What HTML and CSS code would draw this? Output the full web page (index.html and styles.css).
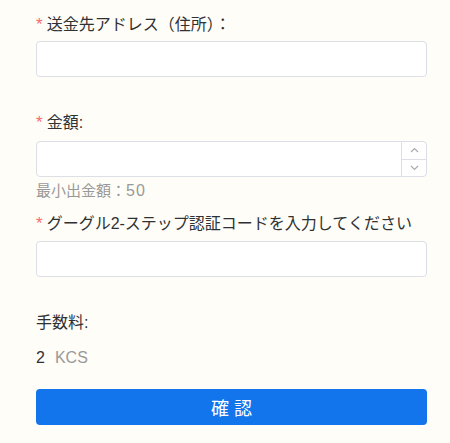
FILE: index.html
```html
<!DOCTYPE html>
<html lang="ja">
<head>
<meta charset="utf-8">
<link rel="stylesheet" href="styles.css">
</head>
<body>
<form class="form">
  <div class="item item-addr">
    <label class="label"><span class="req">*</span>送金先アドレス（住所）：</label>
    <div class="input"></div>
  </div>
  <div class="item item-amount">
    <label class="label"><span class="req">*</span>金額:</label>
    <div class="input input-number">
      <div class="field"></div>
      <div class="controls">
        <span class="ctl ctl-up">
          <svg width="9" height="6" viewBox="0 0 9 6"><path d="M1 5 L4.5 1.5 L8 5" fill="none" stroke="#a8abb2" stroke-width="1.2"/></svg>
        </span>
        <span class="ctl ctl-down">
          <svg width="9" height="6" viewBox="0 0 9 6"><path d="M1 1 L4.5 4.5 L8 1" fill="none" stroke="#a8abb2" stroke-width="1.2"/></svg>
        </span>
      </div>
    </div>
    <div class="hint">最小出金額：<span class="hint-num">50</span></div>
  </div>
  <div class="item item-code">
    <label class="label"><span class="req">*</span>グーグル2-ステップ認証コードを入力してください</label>
    <div class="input"></div>
  </div>
  <div class="fee">
    <div class="label">手数料:</div>
    <div class="fee-value"><span class="num">2</span><span class="unit">KCS</span></div>
  </div>
  <button type="button" class="btn">確 認</button>
</form>
</body>
</html>
```

FILE: styles.css
```css
html, body {
  margin: 0;
  padding: 0;
  background: #fffdf8;
}
body {
  font-family: "Liberation Sans", "Noto Sans CJK JP", sans-serif;
  color: #303133;
}
.form {
  width: 391px;
  padding: 13px 0 0 36px;
}
.label {
  display: block;
  font-size: 16px;
  line-height: 22px;
  padding-top: 1px;
  color: #303133;
}
.req {
  color: #f56c6c;
  margin-right: 4px;
  font-size: 17px;
}
.input {
  box-sizing: border-box;
  height: 36px;
  background: #fff;
  border: 1px solid #dcdfe6;
  border-radius: 4px;
}
.item-addr .label { margin-bottom: 5px; }
.item-addr { margin-bottom: 34px; }
.item-amount .label { margin-bottom: 7px; }
.input-number {
  display: flex;
}
.field { flex: 1; }
.controls {
  width: 24px;
  display: flex;
  flex-direction: column;
  border-left: 1px solid #dcdfe6;
}
.ctl {
  flex: 1;
  display: flex;
  align-items: center;
  justify-content: center;
}
.ctl-up { border-bottom: 1px solid #dcdfe6; }
.hint {
  margin-top: 5px;
  font-size: 15px;
  line-height: 18px;
  color: #999;
}
.hint-num {
  font-size: 16px;
  letter-spacing: 1px;
}
.item-amount { margin-bottom: 12px; }
.item-code .label { margin-bottom: 6px; }
.item-code { margin-bottom: 34px; }
.fee-value {
  margin-top: 13px;
  font-size: 16px;
  line-height: 22px;
}
.num { color: #303133; margin-right: 10px; }
.unit { color: #999; }
.btn {
  display: block;
  margin-top: 20px;
  width: 391px;
  height: 36px;
  border: none;
  border-radius: 4px;
  background: #1275ec;
  color: #fff;
  font-family: "Liberation Sans", "Noto Sans CJK JP", sans-serif;
  font-size: 18px;
  padding: 0;
}
```
